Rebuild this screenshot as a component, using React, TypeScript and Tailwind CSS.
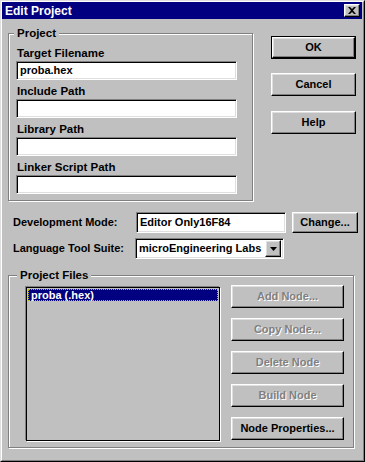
import React from "react";

const raised =
  "border border-t-white border-l-white border-r-black border-b-black shadow-[inset_-1px_-1px_0_#808080,inset_1px_1px_0_#dfdfdf] bg-[#c0c0c0]";
const sunken =
  "border border-t-[#808080] border-l-[#808080] border-r-white border-b-white shadow-[inset_1px_1px_0_#000,inset_-1px_-1px_0_#dfdfdf]";
const etched =
  "border border-[#808080] shadow-[inset_1px_1px_0_#fff,1px_1px_0_#fff]";

function Button({
  label,
  disabled,
  className = "",
}: {
  label: string;
  disabled?: boolean;
  className?: string;
}) {
  return (
    <div className={`flex shrink-0 items-center justify-center whitespace-nowrap ${raised} ${className}`}>
      <span
        className={
          disabled ? "text-[#808080] [text-shadow:1px_1px_0_#fff]" : "text-black"
        }
      >
        {label}
      </span>
    </div>
  );
}

function Field({ value = "" }: { value?: string }) {
  return (
    <div className={`mt-[1px] flex h-[19px] w-[221px] items-center bg-white pl-[3px] ${sunken}`}>
      {value}
    </div>
  );
}

function Label({ text, first }: { text: string; first?: boolean }) {
  return (
    <p className={`pl-[1px] text-[11.5px] leading-[14px] ${first ? "" : "mt-[4px]"}`}>{text}</p>
  );
}

export default function App() {
  return (
    <div className="h-[462px] w-[365px] bg-[#c0c0c0] font-['Liberation_Sans',Arial,sans-serif] text-[11px] font-bold text-black">
      <div className="h-full border border-t-[#dfdfdf] border-l-[#dfdfdf] border-r-black border-b-black">
        <div className="flex h-full flex-col border border-t-white border-l-white border-r-[#808080] border-b-[#808080] pr-[1px]">
          {/* title bar */}
          <div className="flex h-[17px] items-center justify-between bg-[#000080] pl-[3px] pr-[2px]">
            <span className="text-[12px] text-white">Edit Project</span>
            <div className={`flex h-[13px] w-[16px] items-center justify-center ${raised}`}>
              <svg width="8" height="7" viewBox="0 0 8 7">
                <path d="M0 0h2l2 2 2-2h2L5 3.5 8 7H6L4 5 2 7H0l3-3.5z" fill="#000" />
              </svg>
            </div>
          </div>

          <div className="flex flex-col pl-[6px]">
            {/* top row */}
            <div className="mt-[14px] flex items-start">
              <div className={`relative h-[168px] w-[245px] shrink-0 pl-[7px] pt-[12px] ${etched}`}>
                <span className="absolute left-[5px] top-[-8px] bg-[#c0c0c0] px-[3px] text-[11.5px] leading-[14px]">
                  Project
                </span>
                <Label text="Target Filename" first />
                <Field value="proba.hex" />
                <Label text="Include Path" />
                <Field />
                <Label text="Library Path" />
                <Field />
                <Label text="Linker Script Path" />
                <Field />
              </div>

              <div className="ml-[18px] flex flex-col">
                <div className="mt-[3px] border border-black">
                  <Button label="OK" className="h-[21px] w-[83px]" />
                </div>
                <Button label="Cancel" className="mt-[14px] h-[23px] w-[85px]" />
                <Button label="Help" className="mt-[15px] h-[23px] w-[85px]" />
              </div>
            </div>

            {/* development mode */}
            <div className="mt-[11px] flex h-[21px] items-center whitespace-nowrap">
              <span className="ml-[5px] w-[123px] shrink-0">Development Mode:</span>
              <div className={`flex h-[21px] w-[150px] shrink-0 items-center bg-white pl-[3px] ${sunken}`}>
                Editor Only16F84
              </div>
              <Button label="Change..." className="ml-[6px] h-[21px] w-[66px]" />
            </div>

            {/* language tool suite */}
            <div className="mt-[5px] flex h-[21px] items-center whitespace-nowrap">
              <span className="ml-[5px] w-[122px] shrink-0">Language Tool Suite:</span>
              <div className={`flex h-[21px] w-[149px] shrink-0 items-center justify-between bg-white pl-[3px] pr-[2px] ${sunken}`}>
                <span>microEngineering Labs</span>
                <div className={`flex h-[17px] w-[16px] items-center justify-center ${raised}`}>
                  <svg width="7" height="4" viewBox="0 0 7 4">
                    <path d="M0 0h7L3.5 4z" fill="#000" />
                  </svg>
                </div>
              </div>
            </div>

            {/* project files */}
            <div className={`relative mt-[16px] flex h-[173px] w-[346px] items-start pl-[17px] ${etched}`}>
              <span className="absolute left-[8px] top-[-8px] bg-[#c0c0c0] px-[3px] text-[11.5px] leading-[14px]">
                Project Files
              </span>
              <div className="mt-[11px] h-[154px] w-[194px] shrink-0 border border-black bg-[#c0c0c0] p-[1px] shadow-[-1px_-1px_0_#808080,1px_1px_0_#fff]">
                <div className="flex h-[12px] items-center border border-dotted border-[#c0c000] bg-[#000080] pl-[2px] text-white">
                  proba (.hex)
                </div>
              </div>
              <div className="ml-[11px] mt-[9px] flex flex-col gap-[10px]">
                <Button label="Add Node..." disabled className="h-[23px] w-[113px]" />
                <Button label="Copy Node..." disabled className="h-[23px] w-[113px]" />
                <Button label="Delete Node" disabled className="h-[23px] w-[113px]" />
                <Button label="Build Node" disabled className="h-[23px] w-[113px]" />
                <Button label="Node Properties..." className="h-[23px] w-[113px]" />
              </div>
            </div>
          </div>
        </div>
      </div>
    </div>
  );
}
